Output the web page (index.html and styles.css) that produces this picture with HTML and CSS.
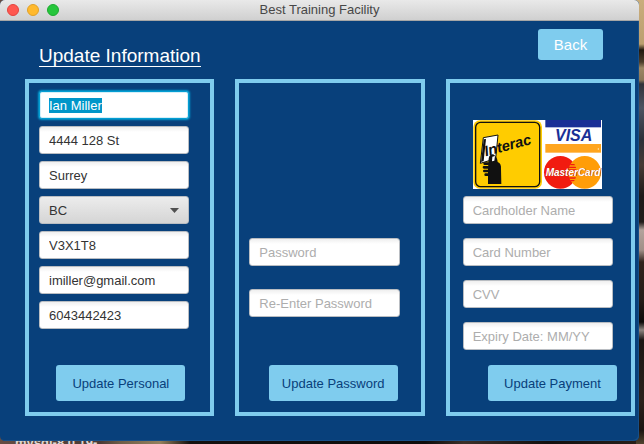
FILE: index.html
```html
<!DOCTYPE html>
<html lang="en">
<head>
<meta charset="utf-8">
<title>Best Training Facility</title>
<link rel="stylesheet" href="styles.css">
</head>
<body>
<div class="desktop">
  <span class="desktop-label">mysql-8.0.19-</span>
  <div class="window">
    <div class="titlebar">
      <div class="lights">
        <button class="light light-close" type="button" aria-label="Close"></button>
        <button class="light light-min" type="button" aria-label="Minimize"></button>
        <button class="light light-max" type="button" aria-label="Zoom"></button>
      </div>
      <span class="window-title">Best Training Facility</span>
    </div>
    <header class="page-head">
      <h1 class="heading">Update Information</h1>
      <button class="back" type="button">Back</button>
    </header>
    <main class="panels">
      <form class="panel panel-personal">
        <div class="fields">
          <input class="field" id="name" type="text" aria-label="Name" value="Ian Miller">
          <input class="field" type="text" aria-label="Address" value="4444 128 St">
          <input class="field" type="text" aria-label="City" value="Surrey">
          <div class="select-wrap">
            <select class="field province" aria-label="Province"><option>BC</option></select>
            <svg class="arrow" viewBox="0 0 9 5" aria-hidden="true"><path d="M0 0h9L4.500 5z" fill="#505050"/></svg>
          </div>
          <input class="field" type="text" aria-label="Postal code" value="V3X1T8">
          <input class="field" type="text" aria-label="Email" value="imiller@gmail.com">
          <input class="field" type="text" aria-label="Phone" value="6043442423">
        </div>
        <button class="update" type="button">Update Personal</button>
      </form>
      <form class="panel panel-password">
        <div class="fields">
          <input class="field" type="password" aria-label="Password" placeholder="Password">
          <input class="field" type="password" aria-label="Re-Enter Password" placeholder="Re-Enter Password">
        </div>
        <button class="update" type="button">Update Password</button>
      </form>
      <form class="panel panel-payment">
        <svg class="cards" viewBox="0 0 387 207" role="img" aria-label="Interac, Visa, MasterCard">
          <defs>
            <clipPath id="left-disc"><circle cx="262" cy="157" r="49"/></clipPath>
          </defs>
          <rect width="387" height="207" fill="#fff"/>
          <rect x="1" y="1" width="206" height="205" rx="20" fill="#fc0"/>
          <rect x="8" y="7" width="192" height="193" rx="15" fill="#fc0" stroke="#111" stroke-width="4"/>
          <path d="M31 53l44-8-7 71-46 14z" fill="#fff" stroke="#111" stroke-width="3"/>
          <path d="M32 58l7-1-7 66-8 3z" fill="#111"/>
          <path d="M47 116c1-12 12-17 19-9 5 4 7 10 8 19 8 3 11 10 10 21l1 45H45v-46z" fill="#111"/>
          <path d="M35 131h10M33 142h12M34 153h11M38 164h8" stroke="#111" stroke-width="8" stroke-linecap="round"/>
          <text class="interac-text" transform="translate(38 109) rotate(-15)">Interac</text>
          <path d="M58 110l8-2-2 14-7 2z" fill="#fff"/>
          <rect x="217" width="167" height="22" fill="#1a2f96"/>
          <text class="visa-text" x="246" y="63">VISA</text>
          <rect x="217" y="72" width="167" height="26" fill="#ffa51f"/>
          <circle cx="376" cy="87" r="2" fill="#fff1cf"/>
          <circle cx="262" cy="157" r="49" fill="#f11b10"/>
          <circle cx="335" cy="157" r="49" fill="#ff9d08"/>
          <g clip-path="url(#left-disc)" stroke="#f11b10" stroke-width="4">
            <path d="M292 134h30M288 142h34M286 150h35M286 158h35M286 166h35M288 174h34M292 182h30"/>
          </g>
          <text class="mc-text mc-shadow" x="220" y="169">MasterCard</text>
          <text class="mc-text" x="218" y="168">MasterCard</text>
        </svg>
        <div class="fields">
          <input class="field" type="text" aria-label="Cardholder Name" placeholder="Cardholder Name">
          <input class="field" type="text" aria-label="Card Number" placeholder="Card Number">
          <input class="field" type="text" aria-label="CVV" placeholder="CVV">
          <input class="field" type="text" aria-label="Expiry Date" placeholder="Expiry Date: MM/YY">
        </div>
        <button class="update" type="button">Update Payment</button>
      </form>
    </main>
  </div>
</div>
<script src="script.js"></script>
</body>
</html>
```
FILE: styles.css
```css
* {
  box-sizing: border-box;
}

body {
  margin: 0;
  font-family: "Liberation Sans", Arial, sans-serif;
  font-size: 13px;
}

.desktop {
  position: relative;
  min-height: 100vh;
  padding: 0 5px 3px 0;
  overflow: hidden;
  background:
    linear-gradient(#c9ad7c 0, #bb9f70 44px, #20180f 50px, #4b3d2b 62px, #9c8765 68px, #8a7759 80px, #30333b 84px, #4c5361 108px, #2b3038 140px, #453a35 165px, #1d1a19 196px, #211c1a 222px, #b3a39c 230px, #a08f87 250px, #30231c 262px, #241c18 300px, #0d0b0a 322px, #8d8580 330px, #1b1614 340px, #2b211c 400px, #1a1411 430px, #51442f) right top / 8px 100% no-repeat,
    linear-gradient(90deg, #654c43 0, #4a3a35 100px, #6e5d47 120px, #93805d 160px, #15110f 190px, #0e0c0b 66%, #3b3029 72%, #120f0e 85%, #2a211b);
}

.desktop-label {
  position: absolute;
  left: 15px;
  bottom: -6px;
  color: #ddd6d1;
  font-size: 13px;
  font-weight: 700;
  line-height: 15px;
}

.window {
  position: relative;
  overflow: hidden;
  border-radius: 5px;
  background: #08407b;
  box-shadow: inset -1px -1px #174f88;
}

.titlebar {
  display: grid;
  grid-template-columns: 1fr auto 1fr;
  align-items: center;
  height: 21px;
  padding: 0 7px;
  border-bottom: 1px solid #a6a6a6;
  background: linear-gradient(#e9e9e9, #d0d0d0);
}

.lights {
  display: flex;
  gap: 8px;
}

.light {
  width: 12px;
  height: 12px;
  padding: 0;
  border: 1px solid;
  border-radius: 50%;
}

.light-close {
  border-color: #e2443f;
  background: #ff5850;
}

.light-min {
  border-color: #e0a028;
  background: #ffb92d;
}

.light-max {
  border-color: #1daa30;
  background: #26c63c;
}

.window-title {
  color: #474747;
  font-family: "Liberation Sans", Arial, sans-serif;
  font-size: 13px;
  line-height: 20px;
}

.page-head {
  display: flex;
  justify-content: space-between;
  align-items: flex-start;
  height: 58px;
  padding: 8px 36px 0 39px;
}

.heading {
  margin: 16px 0 0;
  border-bottom: 1px solid #fff;
  color: #fff;
  font-size: 19px;
  font-weight: 400;
  line-height: 21px;
}

.back {
  width: 65px;
  height: 31px;
  padding: 0;
  border: 0;
  border-radius: 3px;
  background: #7fccee;
  color: #fff;
  font-family: "Liberation Sans", Arial, sans-serif;
  font-size: 15px;
}

.panels {
  display: grid;
  grid-template-columns: repeat(3, 1fr);
  gap: 21px;
  padding: 0 4px 25px 25px;
}

.panel {
  display: flex;
  flex-direction: column;
  min-height: 337px;
  padding: 8px 21px 11px 10px;
  border: 4px solid #7fccee;
}

.fields {
  display: flex;
  flex-direction: column;
  gap: 7px;
}

.panel-password .fields {
  gap: 23px;
  margin-top: 147px;
}

.panel-payment {
  padding-left: 13px;
  padding-right: 18px;
}

.panel-payment .fields {
  gap: 14px;
}

.cards {
  display: block;
  width: 129px;
  height: 69px;
  margin: 29px 0 7px 10px;
}

.field {
  width: 100%;
  height: 28px;
  padding: 0 9px;
  border: 1px solid #b9bdc2;
  border-radius: 3px;
  outline: 0;
  background: linear-gradient(#efefef, #fff 5px);
  color: #333;
  font: 13px "Liberation Sans", Arial, sans-serif;
}

.field::placeholder {
  color: #adadad;
  opacity: 1;
}

.field:focus {
  border-color: #039ed3;
  background: #fff;
  box-shadow: 0 0 2px 1px #039ed3, inset 0 0 0 1px #d5eff8;
}

.field::selection {
  background: #0096c9;
  color: #fff;
}

.select-wrap {
  position: relative;
  display: flex;
}

.province {
  appearance: none;
  background: linear-gradient(#ececec, #d5d5d5);
}

.arrow {
  position: absolute;
  top: 12px;
  right: 10px;
  width: 9px;
  height: 5px;
  pointer-events: none;
}

.update {
  align-self: flex-end;
  width: 129px;
  height: 36px;
  margin-top: auto;
  padding: 0;
  border: 0;
  border-radius: 3px;
  background: #7fccee;
  color: #08407b;
  font: 13px "Liberation Sans", Arial, sans-serif;
}

.panel-personal .update {
  margin-right: 4px;
}

.panel-password .update {
  margin-right: 2px;
}

.panel-payment .update {
  margin-right: -4px;
}

.interac-text {
  fill: #111;
  font: italic 700 44px "Liberation Sans", sans-serif;
}

.visa-text {
  fill: #1a2f96;
  font: italic 700 48px "Liberation Sans", sans-serif;
}

.mc-text {
  fill: #fff;
  font: italic 700 30px "Liberation Sans", sans-serif;
}

.mc-shadow {
  fill: #a5340f;
}
```
FILE: script.js
```js
const nameField = document.getElementById("name");
nameField.focus();
nameField.select();
```
